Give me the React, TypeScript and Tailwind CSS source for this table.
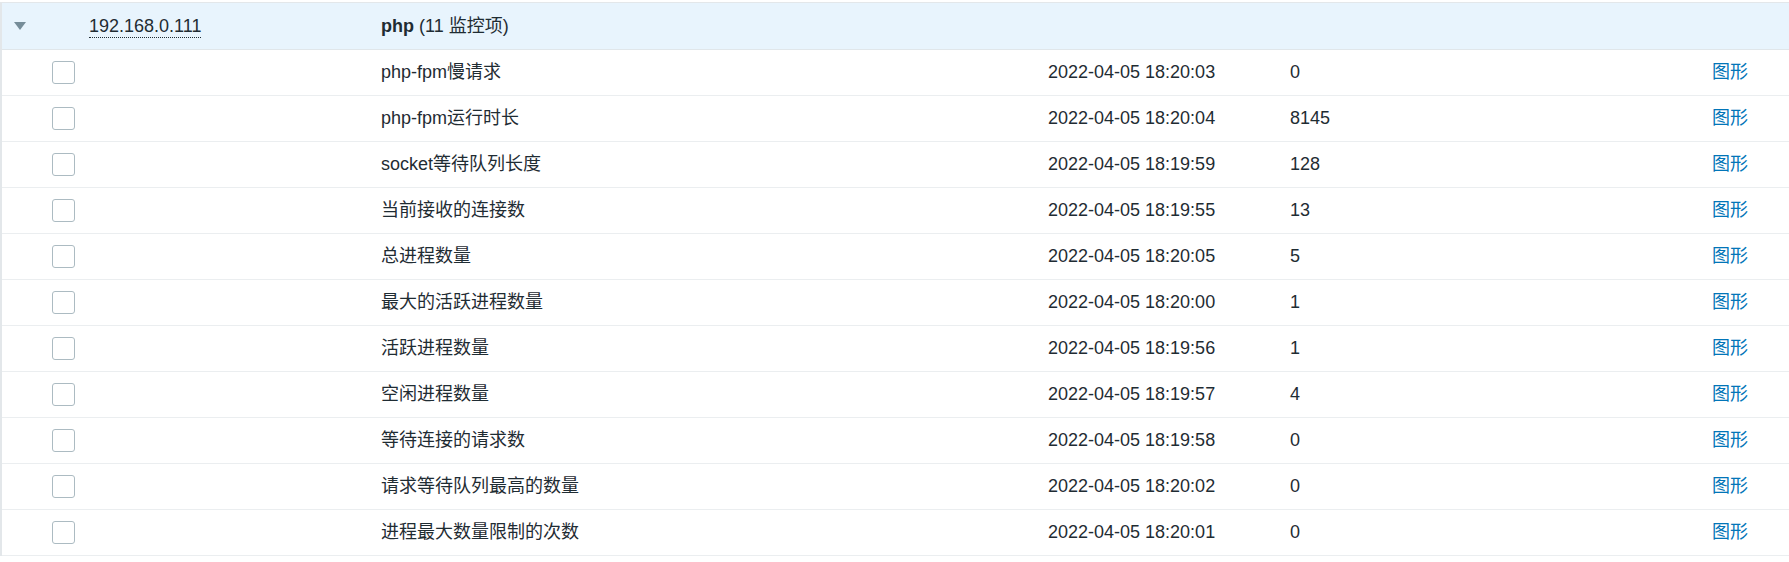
import React from 'react';

type Item = { name: string; time: string; value: string };

const items: Item[] = [
  { name: 'php-fpm慢请求', time: '2022-04-05 18:20:03', value: '0' },
  { name: 'php-fpm运行时长', time: '2022-04-05 18:20:04', value: '8145' },
  { name: 'socket等待队列长度', time: '2022-04-05 18:19:59', value: '128' },
  { name: '当前接收的连接数', time: '2022-04-05 18:19:55', value: '13' },
  { name: '总进程数量', time: '2022-04-05 18:20:05', value: '5' },
  { name: '最大的活跃进程数量', time: '2022-04-05 18:20:00', value: '1' },
  { name: '活跃进程数量', time: '2022-04-05 18:19:56', value: '1' },
  { name: '空闲进程数量', time: '2022-04-05 18:19:57', value: '4' },
  { name: '等待连接的请求数', time: '2022-04-05 18:19:58', value: '0' },
  { name: '请求等待队列最高的数量', time: '2022-04-05 18:20:02', value: '0' },
  { name: '进程最大数量限制的次数', time: '2022-04-05 18:20:01', value: '0' },
];

const font = { fontFamily: '"Liberation Sans", Arial, "Noto Sans CJK SC", sans-serif' };

const ItemRow = ({ item }: { item: Item }): React.JSX.Element => (
  <div className="flex items-center h-[46px] border-b border-[#ebeef0]">
    <div className="w-[87px] shrink-0 pl-[50px] flex items-center">
      <span className="block w-[23px] h-[23px] rounded-[3px] border border-[#acbbc2] bg-white" />
    </div>
    <div className="w-[292px] shrink-0" />
    <div className="w-[667px] shrink-0">{item.name}</div>
    <div className="w-[242px] shrink-0">{item.time}</div>
    <div className="w-[422px] shrink-0">{item.value}</div>
    <div className="text-[#0275b8]">图形</div>
  </div>
);

const App = (): React.JSX.Element => (
  <div className="w-[1789px] h-[562px] bg-white text-[18px] text-[#1f2c33] pt-[2px]" style={font}>
    <div className="border-l-2 border-t border-[#e3e7ea]">
      <div className="flex items-center h-[47px] bg-[#e8f4fd] border-b border-[#e0e6ea]">
        <div className="w-[87px] shrink-0 pl-[12px] flex items-center">
          <svg width="12" height="8" viewBox="0 0 12 8">
            <path d="M0 0 H12 L6 8 Z" fill="#768d99" />
          </svg>
        </div>
        <div className="w-[292px] shrink-0">
          <span className="inline-block leading-[21px] border-b border-dotted border-[#1f2c33]">192.168.0.111</span>
        </div>
        <div>
          <span className="font-bold">php</span> (11 监控项)
        </div>
      </div>
      {items.map((item) => (
        <ItemRow key={item.name} item={item} />
      ))}
    </div>
  </div>
);

export default App;
